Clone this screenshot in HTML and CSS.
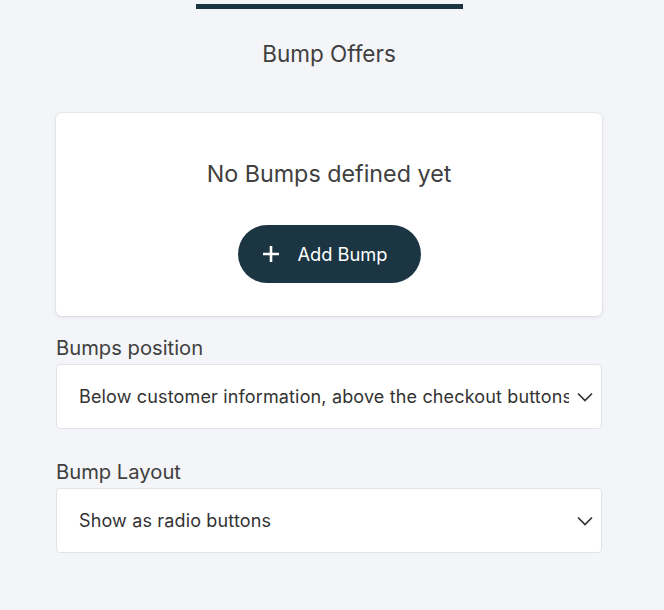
FILE: index.html
```html
<!DOCTYPE html>
<html>
<head>
<meta charset="utf-8">
<link rel="stylesheet" href="styles.css">
</head>
<body>
<div class="page">
  <div class="tab-indicator"></div>
  <h1 class="title">Bump Offers</h1>
  <div class="card">
    <p class="empty">No Bumps defined yet</p>
    <button class="add-btn">
      <svg class="plus" width="18" height="18" viewBox="0 0 18 18"><path d="M9 1v16M1 9h16" stroke="#fff" stroke-width="2.6" fill="none"/></svg>
      <span>Add Bump</span>
    </button>
  </div>
  <div class="field">
    <label class="label">Bumps position</label>
    <div class="select">
      <span class="select-text">Below customer information, above the checkout buttons</span>
      <svg class="chev" width="16" height="10" viewBox="0 0 16 10"><path d="M1 1.5l7 7 7-7" stroke="#333" stroke-width="1.7" fill="none"/></svg>
    </div>
  </div>
  <div class="field">
    <label class="label">Bump Layout</label>
    <div class="select">
      <span class="select-text">Show as radio buttons</span>
      <svg class="chev" width="16" height="10" viewBox="0 0 16 10"><path d="M1 1.5l7 7 7-7" stroke="#333" stroke-width="1.7" fill="none"/></svg>
    </div>
  </div>
</div>
</body>
</html>
```
FILE: styles.css
```css
html, body {
  margin: 0;
  padding: 0;
  background: #f4f5f9;
}
body {
  font-family: Inter, "Noto Sans", sans-serif;
  color: #404040;
}
.page {
  width: 546px;
  margin-left: 56px;
  padding-top: 4px;
  display: flex;
  flex-direction: column;
}
.tab-indicator {
  width: 267px;
  height: 5px;
  background: #1b3543;
  align-self: center;
}
.title {
  margin: 30px 0 0;
  font-size: 22.5px;
  font-weight: 400;
  text-align: center;
  line-height: 30px;
  color: #404040;
}
.card {
  margin-top: 44px;
  background: #fff;
  border-radius: 6px;
  box-shadow: 0 1px 4px rgba(0,0,0,0.09), 0 0 0 1px rgba(0,0,0,0.03);
  height: 203px;
  display: flex;
  flex-direction: column;
  align-items: center;
  box-sizing: border-box;
  padding-top: 45px;
}
.empty {
  margin: 0;
  font-size: 23.3px;
  line-height: 32px;
  color: #404040;
}
.add-btn {
  margin-top: 35px;
  width: 183px;
  height: 58px;
  border: none;
  border-radius: 29px;
  background: #1b3543;
  color: #fff;
  font-family: inherit;
  font-size: 18.3px;
  display: flex;
  align-items: center;
  justify-content: center;
  gap: 17px;
  padding: 0 8px 0 0;
}
.plus {
  display: block;
}
.field {
  display: flex;
  flex-direction: column;
  margin-top: 20px;
}
.field + .field {
  margin-top: 31px;
}
.label {
  font-size: 20.2px;
  line-height: 24px;
  color: #404040;
  margin-bottom: 4px;
}
.select {
  height: 65px;
  box-sizing: border-box;
  background: #fff;
  border: 1px solid #e2e3e6;
  border-radius: 4px;
  display: flex;
  align-items: center;
  padding: 0 8px 0 22px;
  gap: 8px;
}
.select-text {
  flex: 1;
  min-width: 0;
  white-space: nowrap;
  overflow: hidden;
  font-size: 18px;
  letter-spacing: 0.15px;
  color: #333;
}
.chev {
  display: block;
  flex: none;
}
```
